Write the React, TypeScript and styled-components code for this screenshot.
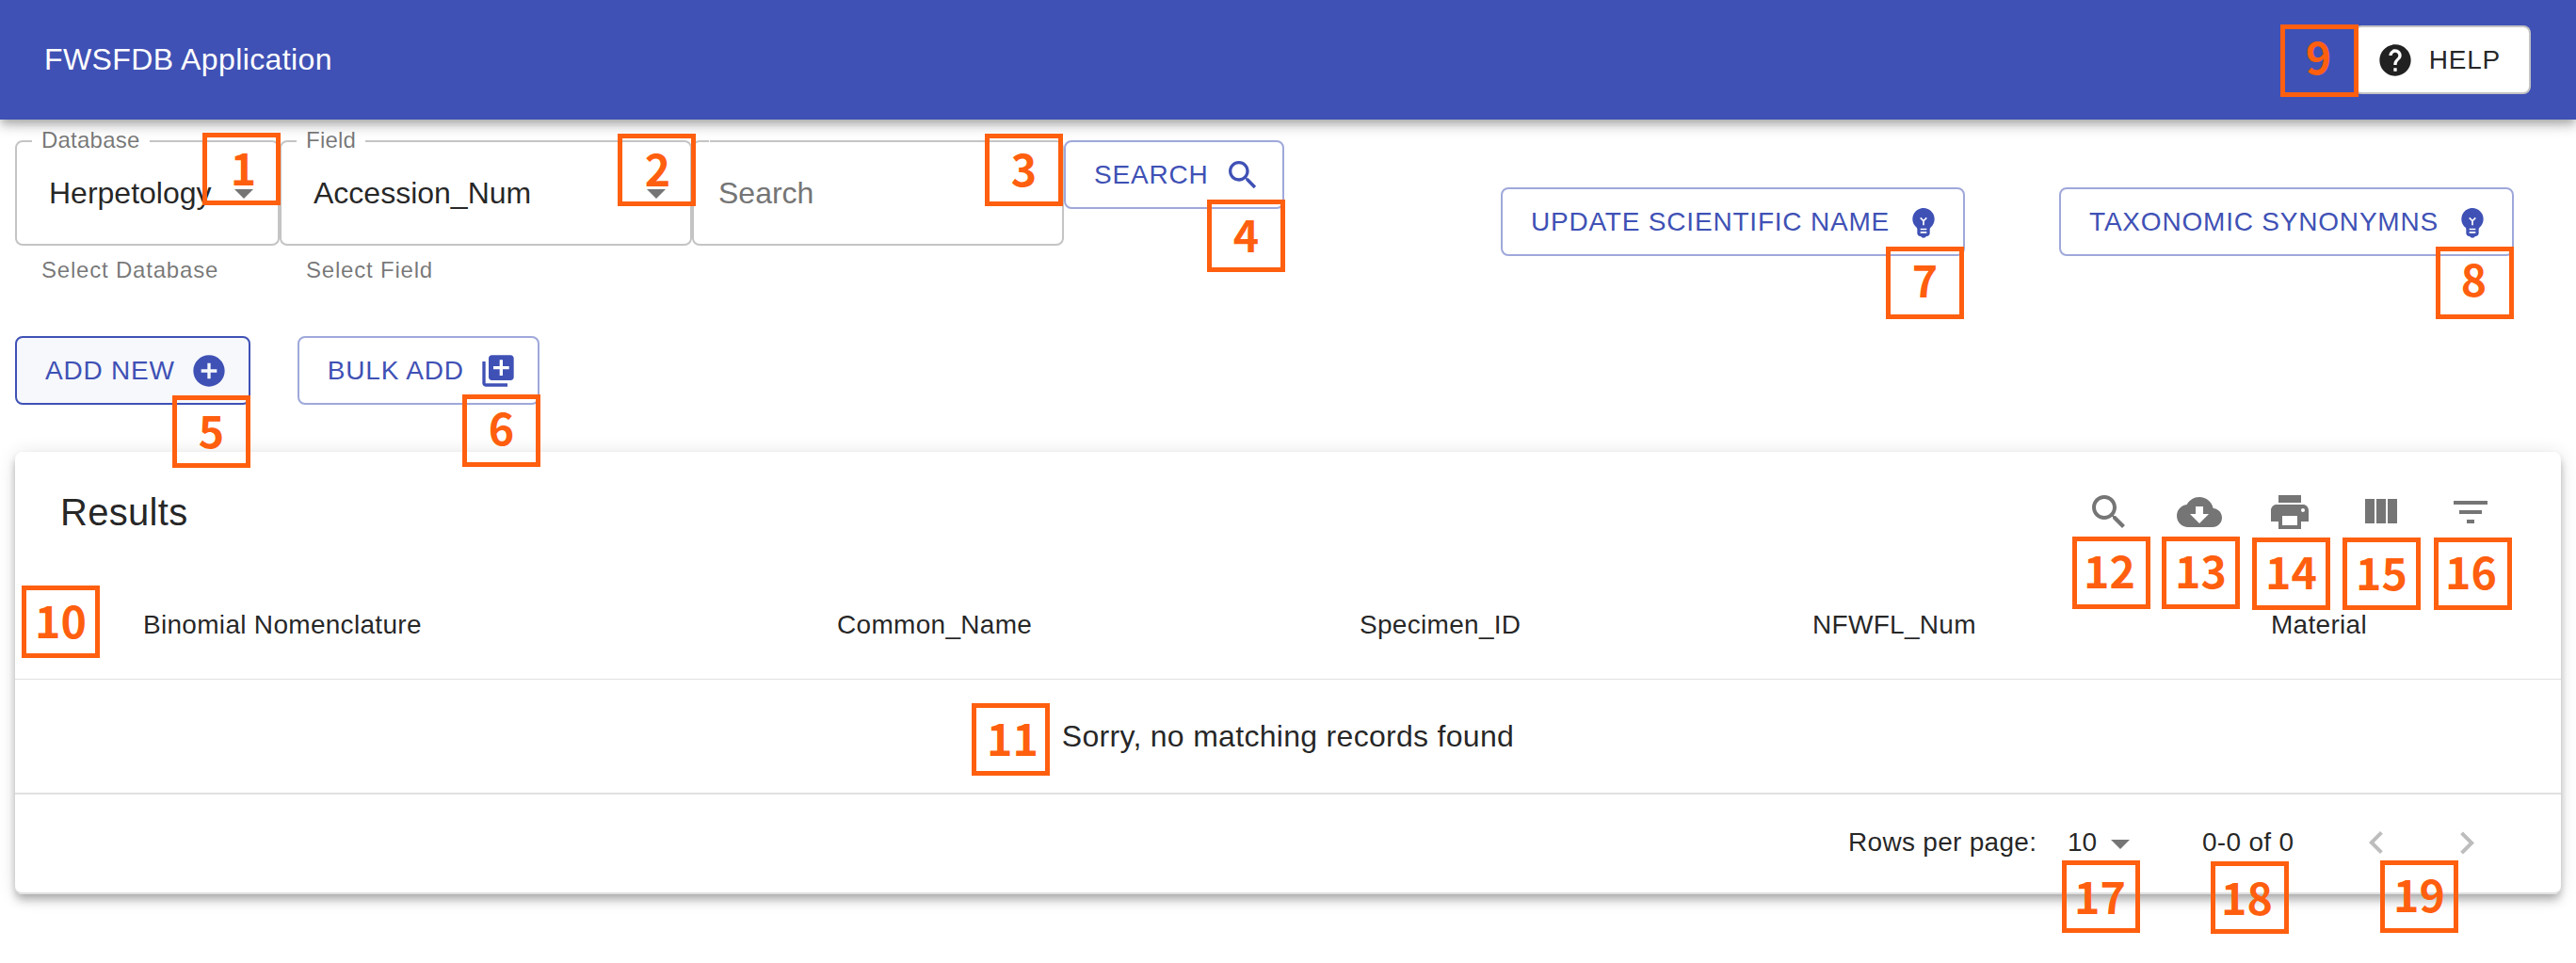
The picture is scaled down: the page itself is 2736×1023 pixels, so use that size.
import React from "react";
import styled, { createGlobalStyle, css } from "styled-components";

const GlobalStyle = createGlobalStyle`
  *, *::before, *::after { box-sizing: border-box; }
  body {
    margin: 0;
    background: #fff;
    color: rgba(0, 0, 0, 0.87);
    font-family: "Liberation Sans", Arial, sans-serif;
    font-size: 32px;
  }
`;

const PRIMARY = "#3f51b5";
const ELEVATION =
  "0 4px 8px -2px rgba(0,0,0,.2), 0 8px 10px 0 rgba(0,0,0,.14), 0 2px 20px 0 rgba(0,0,0,.12)";

const ICONS = {
  search:
    "M15.5 14h-.79l-.28-.27C15.41 12.59 16 11.11 16 9.5 16 5.91 13.09 3 9.5 3S3 5.91 3 9.5 5.91 16 9.5 16c1.61 0 3.09-.59 4.23-1.57l.27.28v.79l5 4.99L20.49 19l-4.99-5zm-6 0C7.01 14 5 11.99 5 9.5S7.01 5 9.5 5 14 7.01 14 9.5 11.99 14 9.5 14z",
  help: "M12 2C6.48 2 2 6.48 2 12s4.48 10 10 10 10-4.48 10-10S17.52 2 12 2zm1 17h-2v-2h2v2zm2.07-7.75l-.9.92C13.45 12.9 13 13.5 13 15h-2v-.5c0-1.1.45-2.1 1.17-2.83l1.24-1.26c.37-.36.59-.86.59-1.41 0-1.1-.9-2-2-2s-2 .9-2 2H8c0-2.21 1.79-4 4-4s4 1.79 4 4c0 .88-.36 1.68-.93 2.25z",
  bulb: "M12 3c-.46 0-.93.04-1.4.14-2.76.53-4.96 2.76-5.48 5.52-.48 2.61.48 5.01 2.22 6.56.43.38.66.91.66 1.47V19c0 1.1.9 2 2 2h.28c.35.6.98 1 1.72 1s1.38-.4 1.72-1H14c1.1 0 2-.9 2-2v-2.31c0-.55.22-1.09.64-1.46C18.09 13.95 19 12.08 19 10c0-3.87-3.13-7-7-7zm2 16h-4v-1h4v1zm0-2h-4v-1h4v1zm-1.5-5.59V14h-1v-2.59L9.67 9.59l.71-.71L12 10.5l1.62-1.62.71.71-1.83 1.82z",
  addCircle:
    "M12 2C6.48 2 2 6.48 2 12s4.48 10 10 10 10-4.48 10-10S17.52 2 12 2zm5 11h-4v4h-2v-4H7v-2h4V7h2v4h4v2z",
  library:
    "M4 6H2v14c0 1.1.9 2 2 2h14v-2H4V6zm16-4H8c-1.1 0-2 .9-2 2v12c0 1.1.9 2 2 2h12c1.1 0 2-.9 2-2V4c0-1.1-.9-2-2-2zm-1 9h-4v4h-2v-4H9V9h4V5h2v4h4v2z",
  download:
    "M19.35 10.04C18.67 6.59 15.64 4 12 4 9.11 4 6.6 5.64 5.35 8.04 2.34 8.36 0 10.91 0 14c0 3.31 2.69 6 6 6h13c2.76 0 5-2.24 5-5 0-2.64-2.05-4.78-4.65-4.96zM17 13l-5 5-5-5h3V9h4v4h3z",
  print:
    "M19 8H5c-1.66 0-3 1.34-3 3v6h4v4h12v-4h4v-6c0-1.66-1.34-3-3-3zm-3 11H8v-5h8v5zm3-7c-.55 0-1-.45-1-1s.45-1 1-1 1 .45 1 1-.45 1-1 1zm-1-9H6v4h12V3z",
  columns: "M10 18h5V5h-5v13zm-6 0h5V5H4v13zM16 5v13h5V5h-5z",
  filter: "M10 18h4v-2h-4v2zM3 6v2h18V6H3zm3 7h12v-2H6v2z",
  dropdown: "M7 10l5 5 5-5z",
  left: "M15.41 16.09l-4.58-4.59 4.58-4.59L14 5.5l-6 6 6 6z",
  right: "M8.59 16.34l4.58-4.59-4.58-4.59L10 5.75l6 6-6 6z",
};

type IconName = keyof typeof ICONS;

const Svg = styled.svg<{ $size: number }>`
  display: block;
  flex: none;
  width: ${(p) => p.$size}px;
  height: ${(p) => p.$size}px;
  fill: currentColor;
`;

const Icon = ({ name, size = 48 }: { name: IconName; size?: number }) => (
  <Svg $size={size} viewBox="0 0 24 24" aria-hidden="true">
    <path d={ICONS[name]} />
  </Svg>
);

const Page = styled.div`
  position: relative;
  min-height: 1023px;
`;

const AppBar = styled.header`
  display: flex;
  align-items: center;
  justify-content: space-between;
  height: 127px;
  padding: 0 48px 0 47px;
  background: ${PRIMARY};
  box-shadow: ${ELEVATION};
`;

const AppTitle = styled.h1`
  margin: 0;
  color: #fff;
  font-size: 32px;
  font-weight: 400;
  letter-spacing: 0.4px;
`;

const Button = styled.button<{ $tone?: "primary" | "active" | "neutral" }>`
  display: inline-flex;
  align-items: center;
  gap: 16px;
  flex: none;
  height: 73px;
  margin: 0;
  padding: 0 30px;
  border: 2px solid rgba(63, 81, 181, 0.5);
  border-radius: 8px;
  background: transparent;
  color: ${PRIMARY};
  font: 400 28px/49px "Liberation Sans", Arial, sans-serif;
  letter-spacing: 0.8px;
  text-transform: uppercase;
  white-space: nowrap;

  ${(p) =>
    p.$tone === "active" &&
    css`
      border-color: ${PRIMARY};
      background: rgba(63, 81, 181, 0.04);
    `}
  ${(p) =>
    p.$tone === "neutral" &&
    css`
      border-color: rgba(0, 0, 0, 0.23);
      background: #fff;
      color: rgba(0, 0, 0, 0.87);
    `}
`;

const ButtonIcon = styled.span<{ $side: "start" | "end" }>`
  display: inline-flex;
  ${(p) => (p.$side === "start" ? "margin-left: -8px;" : "margin-right: -8px;")}
`;

const Main = styled.main`
  padding: 11px 16px 0;
`;

const TopRow = styled.div`
  display: flex;
  justify-content: space-between;
  align-items: flex-start;
  height: 219px;
  padding-right: 50px;
`;

const SearchBar = styled.div`
  display: flex;
  align-items: flex-start;
`;

const SearchAction = styled.div`
  display: flex;
  padding-top: 11px;
`;

const NameActions = styled.div`
  display: flex;
  gap: 100px;
  padding-top: 61px;
`;

const FormControl = styled.div<{ $width: number }>`
  flex: none;
  width: ${(p) => p.$width}px;
`;

const Outline = styled.fieldset`
  display: block;
  min-width: 0;
  height: 123px;
  margin: 0;
  padding: 0 12px 0 16px;
  border: 2px solid rgba(0, 0, 0, 0.23);
  border-radius: 8px;
`;

const Legend = styled.legend<{ $empty?: boolean }>`
  height: 24px;
  padding: 0 ${(p) => (p.$empty ? 0 : 10)}px;
  ${(p) => p.$empty && "width: 1px;"}
  color: rgba(0, 0, 0, 0.54);
  font-size: 24px;
  line-height: 21px;
  letter-spacing: 0.22px;
`;

const Value = styled.div<{ $placeholder?: boolean }>`
  display: flex;
  align-items: center;
  justify-content: space-between;
  height: 86px;
  padding-left: ${(p) => (p.$placeholder ? 10 : 18)}px;
  color: ${(p) => (p.$placeholder ? "#757575" : "rgba(0, 0, 0, 0.87)")};
  font-size: 32px;
  white-space: nowrap;

  svg { color: rgba(0, 0, 0, 0.54); }
`;

const Helper = styled.p`
  margin: 6px 28px 0;
  color: rgba(0, 0, 0, 0.54);
  font-size: 24px;
  line-height: 40px;
  letter-spacing: 0.8px;
  white-space: nowrap;
`;

const AddRow = styled.div`
  display: flex;
  gap: 50px;
`;

const Card = styled.section`
  margin-top: 50px;
  border-radius: 8px;
  background: #fff;
  box-shadow: ${ELEVATION};
`;

const Toolbar = styled.div`
  display: flex;
  align-items: center;
  justify-content: space-between;
  height: 128px;
  padding: 0 72px 0 48px;
`;

const CardTitle = styled.h2`
  margin: 0;
  font-size: 40px;
  font-weight: 400;
  line-height: 64px;
  letter-spacing: 0.3px;
`;

const Tools = styled.div`
  display: flex;
  gap: 48px;
  color: rgba(0, 0, 0, 0.54);
`;

const HeadRow = styled.div`
  display: grid;
  grid-template-columns: 104px 737px 555px 481px 487px 1fr;
  align-items: center;
  height: 114px;
  padding-bottom: 2px;
  border-bottom: 1px solid #e0e0e0;
`;

const HeadCell = styled.div`
  padding: 0 32px;
  font-size: 28px;
  letter-spacing: 0.3px;
  white-space: nowrap;
`;

const EmptyRow = styled.div`
  display: flex;
  align-items: center;
  justify-content: center;
  height: 122px;
  border-bottom: 2px solid #e0e0e0;
  font-size: 32px;
  letter-spacing: 0.3px;
`;

const Footer = styled.div`
  display: flex;
  align-items: center;
  justify-content: flex-end;
  height: 106px;
  padding-right: 76px;
  border-bottom: 2px solid #e0e0e0;
  border-radius: 0 0 8px 8px;
  font-size: 28px;
  letter-spacing: 0.3px;
`;

const FooterText = styled.span<{ $width: number }>`
  width: ${(p) => p.$width}px;
  padding-bottom: 2px;
  white-space: nowrap;
`;

const PageSize = styled.div`
  display: flex;
  align-items: center;
  width: 143px;
  letter-spacing: 0;

  svg { color: rgba(0, 0, 0, 0.54); }
`;

const Pager = styled.div`
  display: flex;
  gap: 48px;
  color: rgba(0, 0, 0, 0.26);
`;

/* Numbered annotation frames that float over the controls they describe. */
const Callout = styled.div<{ $x: number; $y: number; $shift: number; $base: number }>`
  position: absolute;
  left: ${(p) => p.$x}px;
  top: ${(p) => p.$y}px;
  width: 83px;
  height: 77px;
  padding-top: ${(p) => p.$base - 50}px;
  border: 5px solid #ff5f0f;
  color: #ff5f0f;
  font: 700 46.5px/50px "Noto Sans CJK SC", sans-serif;
  text-align: center;
  text-indent: ${(p) => p.$shift * 2}px;
  white-space: nowrap;
`;

const CALLOUTS: [number, number, number, number][] = [
  [215, 141, 2, 56],
  [656, 142, 1, 56],
  [1046, 142, 0, 56],
  [1282, 212, 0, 56],
  [183, 420, 0, 56],
  [491, 419, 0, 54],
  [2003, 262, 0, 54],
  [2587, 262, -1, 53],
  [2422, 26, -1, 53],
  [23, 622, 0, 56],
  [1032, 747, 2, 56],
  [2201, 570, -2, 55],
  [2296, 570, 0, 55],
  [2392, 571, 0, 55],
  [2488, 571, 0, 56],
  [2585, 571, -2, 55],
  [2190, 914, -1, 57],
  [2348, 915, -3, 57],
  [2528, 914, 0, 55],
];

const COLUMNS = ["Binomial Nomenclature", "Common_Name", "Specimen_ID", "NFWFL_Num", "Material"];
const TOOLS: IconName[] = ["search", "download", "print", "columns", "filter"];

const EndIcon = ({ name }: { name: IconName }) => (
  <ButtonIcon $side="end">
    <Icon name={name} size={40} />
  </ButtonIcon>
);

const SelectField = (p: { width: number; label: string; value: string; helper: string }) => (
  <FormControl $width={p.width}>
    <Outline>
      <Legend>{p.label}</Legend>
      <Value>
        {p.value}
        <Icon name="dropdown" />
      </Value>
    </Outline>
    <Helper>{p.helper}</Helper>
  </FormControl>
);

export default function App() {
  return (
    <Page>
      <GlobalStyle />
      <AppBar>
        <AppTitle>FWSFDB Application</AppTitle>
        <Button $tone="neutral">
          <ButtonIcon $side="start">
            <Icon name="help" size={40} />
          </ButtonIcon>
          Help
        </Button>
      </AppBar>
      <Main>
        <TopRow>
          <SearchBar>
            <SelectField width={281} label="Database" value="Herpetology" helper="Select Database" />
            <SelectField width={438} label="Field" value="Accession_Num" helper="Select Field" />
            <FormControl $width={395}>
              <Outline>
                <Legend $empty />
                <Value $placeholder>Search</Value>
              </Outline>
            </FormControl>
            <SearchAction>
              <Button>
                Search
                <EndIcon name="search" />
              </Button>
            </SearchAction>
          </SearchBar>
          <NameActions>
            <Button>
              Update Scientific Name
              <EndIcon name="bulb" />
            </Button>
            <Button>
              Taxonomic Synonymns
              <EndIcon name="bulb" />
            </Button>
          </NameActions>
        </TopRow>
        <AddRow>
          <Button $tone="active">
            Add New
            <EndIcon name="addCircle" />
          </Button>
          <Button>
            Bulk Add
            <EndIcon name="library" />
          </Button>
        </AddRow>
        <Card>
          <Toolbar>
            <CardTitle>Results</CardTitle>
            <Tools>
              {TOOLS.map((name) => (
                <Icon key={name} name={name} />
              ))}
            </Tools>
          </Toolbar>
          <HeadRow>
            <span />
            {COLUMNS.map((name) => (
              <HeadCell key={name}>{name}</HeadCell>
            ))}
          </HeadRow>
          <EmptyRow>Sorry, no matching records found</EmptyRow>
          <Footer>
            <FooterText $width={233}>Rows per page:</FooterText>
            <PageSize>
              <FooterText $width={32}>10</FooterText>
              <Icon name="dropdown" />
            </PageSize>
            <FooterText $width={161}>0-0 of 0</FooterText>
            <Pager>
              <Icon name="left" />
              <Icon name="right" />
            </Pager>
          </Footer>
        </Card>
      </Main>
      {CALLOUTS.map(([x, y, shift, base], i) => (
        <Callout key={i} $x={x} $y={y} $shift={shift} $base={base}>
          {i + 1}
        </Callout>
      ))}
    </Page>
  );
}
